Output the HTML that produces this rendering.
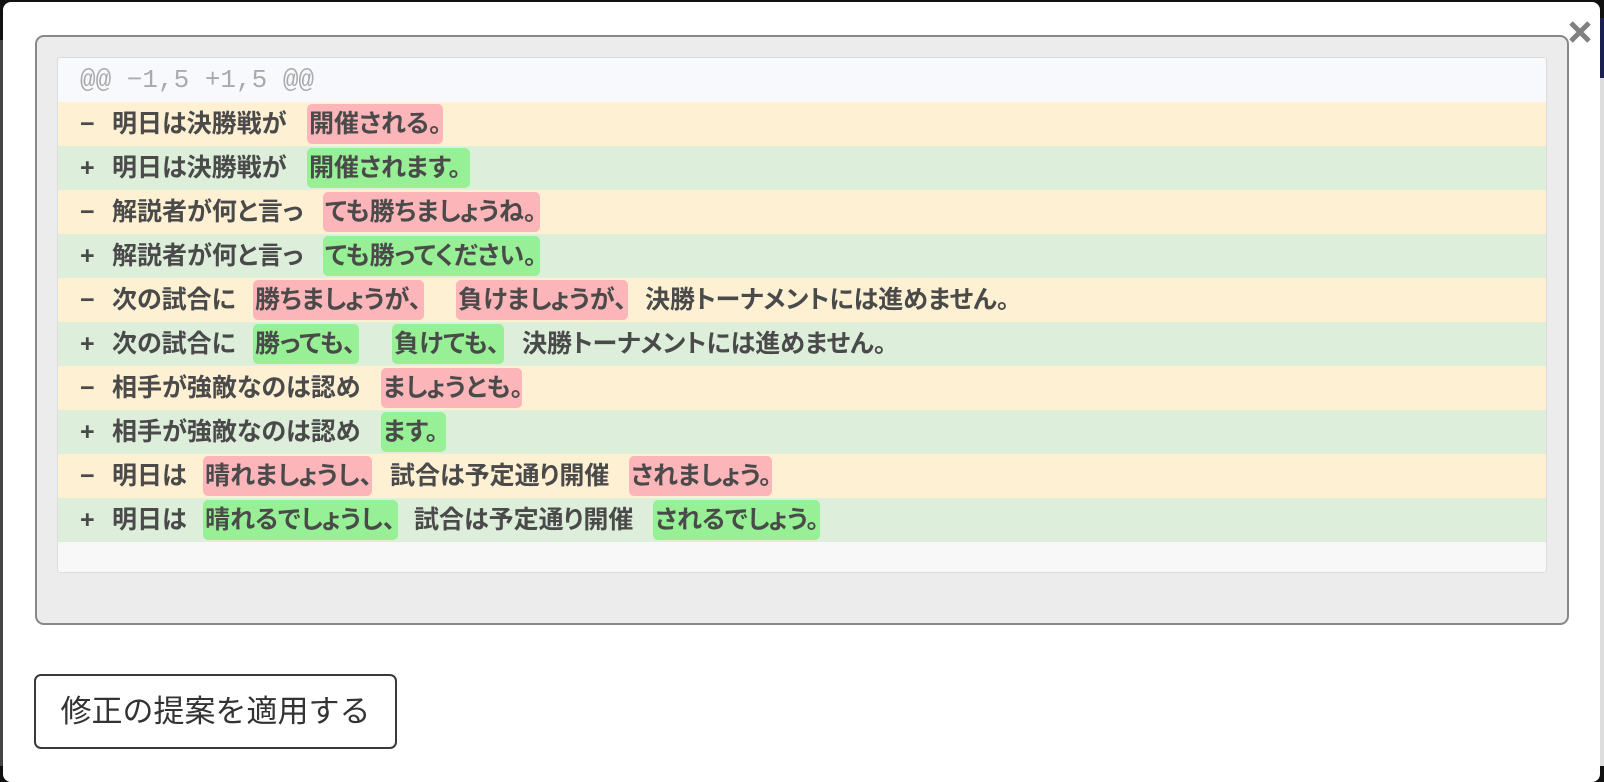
<!DOCTYPE html>
<html><head><meta charset="utf-8"><style>
*{margin:0;padding:0;box-sizing:border-box}
body{width:1604px;height:766px;background:#111;position:relative;overflow:hidden;font-family:"Liberation Sans","Noto Sans CJK JP",sans-serif}
.side{position:absolute;left:0;top:40px;width:4px;height:726px;background:#444}
.rside{position:absolute;right:0;top:18px;width:6px;height:748px;background:#ddd}
.rside2{position:absolute;right:0;top:18px;width:6px;height:60px;background:#1a2150}
.modal{position:absolute;left:3px;top:2px;width:1597px;height:780px;background:#fff;border-radius:8px}
.box{position:absolute;left:35px;top:35px;width:1534px;height:590px;background:#ececec;border:2px solid #888;border-radius:9px}
.inner{position:absolute;left:57px;top:57px;width:1490px;height:516px;background:#f8f8f8;border:1px solid #dcdcdc;border-radius:3px;overflow:hidden}
.row{position:absolute;left:0;width:100%;height:44px;font-size:25px;color:#4a4a4a;font-weight:bold;font-feature-settings:"palt"}
.row span{position:absolute;top:0;line-height:44px;white-space:nowrap}
.row span.h{top:2px;height:40px;line-height:40px;border-radius:5px;padding-left:2px}
.m{background:#fdf0d3}.p{background:#ddeedb}
.m .h{background:#fcb5b9}.p .h{background:#97f095}
.hdr{position:absolute;left:0;top:0;width:100%;height:45px;background:#f8f9fd;font-family:"Liberation Mono",monospace;font-size:26px;color:#aaa;line-height:45px;padding-left:22px}
.btn{position:absolute;left:34px;top:674px;width:363px;height:75px;border:2px solid #3a3a3a;border-radius:7px;background:#fff;font-size:31px;color:#333;line-height:71px;text-align:center}
</style></head><body>
<div class="side"></div><div class="rside"></div><div class="rside2"></div>
<div class="modal"></div>
<svg style="position:absolute;left:1568px;top:20px" width="24" height="24" viewBox="0 0 24 24"><path d="M3 3L21 21M21 3L3 21" stroke="#808080" stroke-width="5"/></svg>
<div class="box"></div>
<div class="inner">
<div class="hdr">@@ −1,5 +1,5 @@</div>
<div class="row m" style="top:44px"><span style="left:22px">−</span><span style="left:54px">明日は決勝戦が</span><span class="h" style="left:249px;width:136px">開催される。</span></div>
<div class="row p" style="top:88px"><span style="left:22px">+</span><span style="left:54px">明日は決勝戦が</span><span class="h" style="left:249px;width:163px">開催されます。</span></div>
<div class="row m" style="top:132px"><span style="left:22px">−</span><span style="left:54px">解説者が何と言っ</span><span class="h" style="left:265px;width:217px">ても勝ちましょうね。</span></div>
<div class="row p" style="top:176px"><span style="left:22px">+</span><span style="left:54px">解説者が何と言っ</span><span class="h" style="left:265px;width:217px">ても勝ってください。</span></div>
<div class="row m" style="top:220px"><span style="left:22px">−</span><span style="left:54px">次の試合に</span><span class="h" style="left:195px;width:171px">勝ちましょうが、</span><span class="h" style="left:398px;width:172px">負けましょうが、</span><span style="left:587px">決勝トーナメントには進めません。</span></div>
<div class="row p" style="top:264px"><span style="left:22px">+</span><span style="left:54px">次の試合に</span><span class="h" style="left:195px;width:106px">勝っても、</span><span class="h" style="left:334px;width:112px">負けても、</span><span style="left:464px">決勝トーナメントには進めません。</span></div>
<div class="row m" style="top:308px"><span style="left:22px">−</span><span style="left:54px">相手が強敵なのは認め</span><span class="h" style="left:323px;width:141px">ましょうとも。</span></div>
<div class="row p" style="top:352px"><span style="left:22px">+</span><span style="left:54px">相手が強敵なのは認め</span><span class="h" style="left:323px;width:65px">ます。</span></div>
<div class="row m" style="top:396px"><span style="left:22px">−</span><span style="left:54px">明日は</span><span class="h" style="left:145px;width:169px">晴れましょうし、</span><span style="left:332px">試合は予定通り開催</span><span class="h" style="left:571px;width:143px">されましょう。</span></div>
<div class="row p" style="top:440px"><span style="left:22px">+</span><span style="left:54px">明日は</span><span class="h" style="left:145px;width:195px">晴れるでしょうし、</span><span style="left:356px">試合は予定通り開催</span><span class="h" style="left:595px;width:167px">されるでしょう。</span></div>
</div>
<div class="btn">修正の提案を適用する</div>
</body></html>
